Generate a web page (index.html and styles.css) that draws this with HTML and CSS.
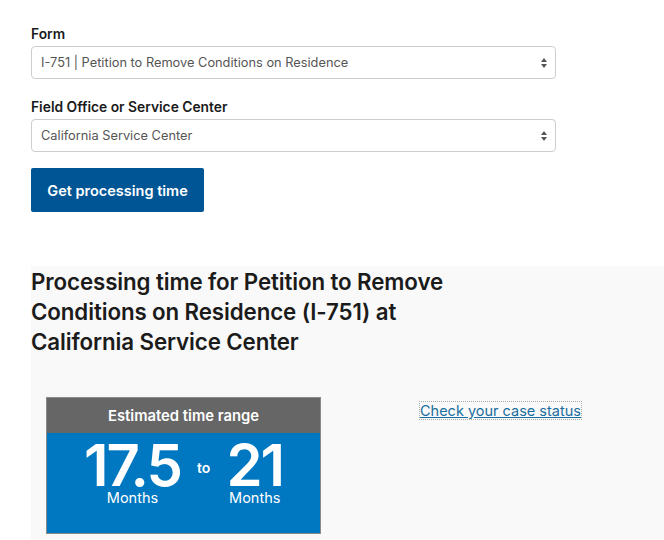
FILE: index.html
```html
<!DOCTYPE html>
<html lang="en">
<head>
<meta charset="utf-8">
<link rel="stylesheet" href="styles.css">
</head>
<body>
<div class="page">
  <form class="form">
    <label class="label">Form</label>
    <div class="select">
      <span class="select-text">I-751 | Petition to Remove Conditions on Residence</span>
      <span class="arrows"><svg width="8" height="12" viewBox="0 0 8 12"><path d="M4 1 L7 5 H1 Z M4 11 L1 7 H7 Z" fill="#555"/></svg></span>
    </div>
    <label class="label label-2">Field Office or Service Center</label>
    <div class="select">
      <span class="select-text">California Service Center</span>
      <span class="arrows"><svg width="8" height="12" viewBox="0 0 8 12"><path d="M4 1 L7 5 H1 Z M4 11 L1 7 H7 Z" fill="#555"/></svg></span>
    </div>
    <button type="button" class="btn">Get processing time</button>
  </form>
  <section class="result">
    <h2 class="title">Processing time for Petition to Remove Conditions on Residence (I-751) at California Service Center</h2>
    <div class="result-row">
      <div class="card">
        <div class="card-head">Estimated time range</div>
        <div class="card-body">
          <div class="num-col"><span class="num">17.5</span><span class="unit">Months</span></div>
          <div class="to">to</div>
          <div class="num-col"><span class="num">21</span><span class="unit">Months</span></div>
        </div>
      </div>
      <a class="link" href="#">Check your case status</a>
    </div>
  </section>
</div>
</body>
</html>
```
FILE: styles.css
```css
html, body { margin: 0; padding: 0; background: #fff; }
body { font-family: Inter, "Liberation Sans", sans-serif; color: #1b1b1b; }
.page { padding: 25px 0 0 31px; }
.form { width: 525px; display: flex; flex-direction: column; }
.label { font-size: 13.8px; font-weight: 600; color: #1b1b1b; line-height: 18px; }
.label-2 { margin-top: 19px; }
.select {
  margin-top: 3px;
  height: 31px; border: 1px solid #cdcdcd; border-radius: 4px;
  display: flex; align-items: center; justify-content: space-between;
  padding: 0 7px 0 9px; background: #fff;
}
.select-text { font-size: 12.8px; color: #555; }
.arrows { display: flex; }
.btn {
  margin-top: 16px; align-self: flex-start;
  width: 173px; height: 44px; border: 0; border-radius: 2px;
  background: #005595; color: #fff;
  font-family: inherit; font-size: 14.5px; font-weight: 600;
}
.result { margin-top: 54px; background: #f9f9f9; height: 275px; }
.title {
  margin: 0; padding-top: 1px; width: 432px;
  font-size: 22.3px; font-weight: 600; line-height: 30px; color: #1b1b1b;
  letter-spacing: -0.1px;
}
.result-row { display: flex; align-items: flex-start; margin-top: 40px; padding-left: 15px; }
.card { width: 273px; border: 1px solid #8a8a8a; }
.card-head {
  height: 35px; background: #666; color: #fff;
  font-size: 14.8px; font-weight: 600;
  display: flex; align-items: center; justify-content: center;
}
.card-body {
  height: 100px; background: #0078c1; color: #fff;
  display: flex; justify-content: center; align-items: flex-start;
}
.num-col { display: flex; flex-direction: column; align-items: center; }
.num { display: block; font-size: 58px; font-weight: 600; line-height: 48px; height: 48px; margin-top: 8px; letter-spacing: -2px; }
.unit { display: block; font-size: 14.5px; line-height: 16px; margin-top: 1px; font-weight: 400; }
.to { font-size: 14px; font-weight: 600; margin: 26px 16px 0; }
.link {
  margin: 5px 0 0 99px; font-size: 14.5px; color: #1a6e9e; text-decoration: underline;
  outline: 1px dotted #aaa;
}
```
